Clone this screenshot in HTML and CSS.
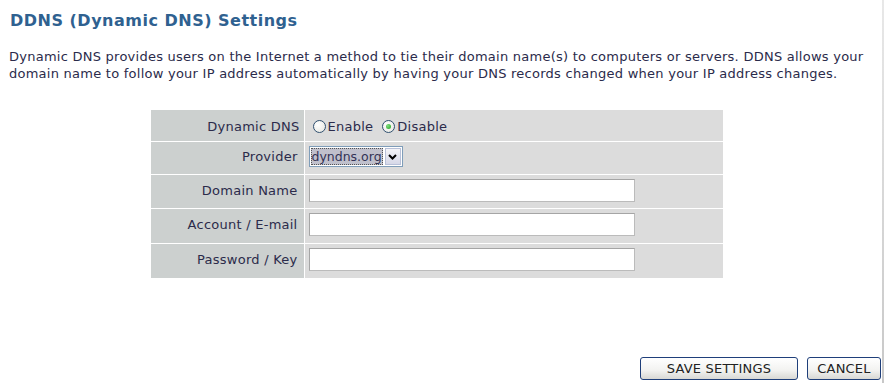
FILE: index.html
```html
<!doctype html>
<html lang="en">
	<head>
		<meta charset="utf-8">
		<title>DDNS Settings</title>
		<link rel="stylesheet" href="styles.css">
	</head>
	<body>

		<main class="page">

			<h1 class="title">DDNS (Dynamic DNS) Settings</h1>

			<p class="intro">Dynamic DNS provides users on the Internet a method to tie their domain name(s) to computers or servers. DDNS allows your domain name to follow your IP address automatically by having your DNS records changed when your IP address changes.</p>

			<table class="settings">
				<tr class="row_1">
					<th>Dynamic DNS</th>
					<td>
						<div class="radios">
							<label class="radio"><input type="radio" name="ddns">Enable</label>
							<label class="radio"><input type="radio" name="ddns" checked>Disable</label>
						</div>
					</td>
				</tr>
				<tr class="row_2">
					<th>Provider</th>
					<td>
						<span class="select"><span class="select_value">dyndns.org</span><span class="select_arrow"><svg width="9" height="6" viewBox="0 0 9 6"><path d="M1 1 L4.5 4.5 L8 1" fill="none" stroke="#000" stroke-width="2"/></svg></span></span>
					</td>
				</tr>
				<tr class="row_3">
					<th>Domain Name</th>
					<td><input class="text" type="text"></td>
				</tr>
				<tr>
					<th>Account / E-mail</th>
					<td><input class="text" type="text"></td>
				</tr>
				<tr>
					<th>Password / Key</th>
					<td><input class="text" type="password"></td>
				</tr>
			</table>

			<div class="actions">
				<button class="button button_save">SAVE SETTINGS</button>
				<button class="button button_cancel">CANCEL</button>
			</div>

		</main>

		<div class="edge"></div>

	</body>
</html>
```

FILE: styles.css
```css
/* -------------------------------------------------- */

:root
{
	--title: #2f6190;
	--text: #2b2b4b;
	--label: #ccd0cf;
	--value: #dcdcdc;
	--field: #a5a5a5;
}

*, *::before, *::after { box-sizing: border-box; }

body
{
	margin: 0;
	width: 884px;
	height: 383px;
	overflow: hidden;
	position: relative;

	font-family: "DejaVu Sans", Verdana, sans-serif;
	font-size: 13px;
	letter-spacing: 0.25px;
	color: var( --text );
	background: white;
}

/* -------------------------------------------------- */

.page
{
	padding: 11px 0 0 10px;
}

.title
{
	margin: 0;
	font-size: 16px;
	line-height: 20px;
	font-weight: bold;
	color: var( --title );
	letter-spacing: 0.5px;
}

.intro
{
	margin: 17px 0 0 -1px;
	width: 860px;
	line-height: 17px;
}

/* -------------------------------------------------- */

.settings
{
	margin: 28px 0 0 141px;
	width: 572px;
	border-collapse: collapse;
}

.settings th,
.settings td
{
	height: 35px;
	padding: 0 4px 2px;
	border-top: 1px solid white;
	border-bottom: 1px solid white;
	vertical-align: middle;
}

.settings tr:first-child th,
.settings tr:first-child td { border-top: none; }

.settings .row_1 th,
.settings .row_1 td { height: 31px; padding: 2px 4px 0; }

.settings .row_2 th,
.settings .row_2 td { height: 33px; }

.settings .row_3 th,
.settings .row_3 td { height: 34px; }

.settings th
{
	width: 153px;
	padding-right: 6px;
	text-align: right;
	font-weight: normal;
	background: var( --label );
	border-right: 1px solid white;
}

.settings td
{
	background: var( --value );
}

/* -------------------------------------------------- */

.radios
{
	display: flex;
	align-items: center;
	gap: 5px;
}

.radio
{
	display: flex;
	align-items: center;
}

.radio input
{
	appearance: none;
	display: grid;
	place-items: center;
	flex: none;
	margin: 0 2px 0 4px;
	width: 13px;
	height: 13px;
	border: 1px solid #2f4f6f;
	border-radius: 50%;
	background: radial-gradient( circle at 35% 35% , #ffffff , #e4e4de );
}

.radio input:checked::after
{
	content: "";
	width: 5px;
	height: 5px;
	border-radius: 50%;
	background: radial-gradient( circle at 35% 35% , #7fdf7f , #21a121 );
}

.select
{
	display: inline-flex;
	align-items: stretch;
	height: 21px;
	border: 1px solid #7f9db9;
	background: white;
	vertical-align: middle;
	letter-spacing: 0;
	font-size: 12.5px;
}

.select_value
{
	display: flex;
	align-items: center;
	padding: 0 1px;
	margin: 1px;
	background: #c0c0cc;
	outline: 1px dotted #555;
	outline-offset: -1px;
	color: #333355;
}

.select_arrow
{
	display: flex;
	align-items: center;
	justify-content: center;
	width: 16px;
	margin: 1px;
	background: linear-gradient( #f4f4f8 , #d6d8e8 );
	border: 1px solid #b8c0d8;
}

.text
{
	display: block;
	width: 326px;
	height: 23px;
	margin: 0;
	border: 1px solid var( --field );
	border-right-color: #bbb;
	border-bottom-color: #bbb;
	background: white;
	font: inherit;
}

/* -------------------------------------------------- */

.actions
{
	position: absolute;
	right: 3px;
	top: 357px;
	display: flex;
	gap: 9px;
}

.button
{
	height: 23px;
	padding: 0;
	font-family: "DejaVu Sans", Verdana, sans-serif;
	font-size: 13px;
	letter-spacing: 0.2px;
	color: #222;
	border: 1px solid #1f3f7a;
	border-radius: 3px;
	background: linear-gradient( #ffffff , #f2f2f0 60% , #d8d8d4 );
}

.button_save { width: 158px; }
.button_cancel { width: 74px; }

.edge
{
	position: absolute;
	right: 0;
	top: 0;
	width: 2px;
	height: 383px;
	background: linear-gradient( #e8e8e8 , #c8c8c8 );
}

/* -------------------------------------------------- */
```
